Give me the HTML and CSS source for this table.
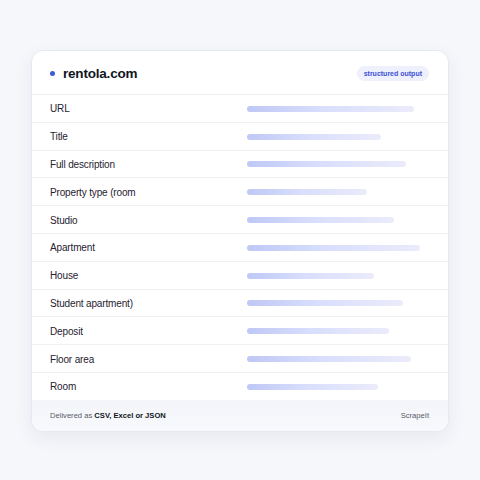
FILE: index.html
```html
<!DOCTYPE html>
<html lang="en">
<head>
    <meta charset="UTF-8">
    <meta name="viewport" content="width=device-width, initial-scale=1.0">
    <title>rentola.com - structured output</title>
    <link rel="stylesheet" href="styles.css">
</head>
<body>
    <div class="card">
        <div class="card-header">
            <div class="site">
                <span class="dot"></span>
                <span class="site-name">rentola.com</span>
            </div>
            <span class="badge">structured output</span>
        </div>

        <div class="field-list">
            <div class="field-row"><span class="field-label">URL</span><div class="bar-cell"><div class="bar" style="width: 167px"></div></div></div>
            <div class="field-row"><span class="field-label">Title</span><div class="bar-cell"><div class="bar" style="width: 134px"></div></div></div>
            <div class="field-row"><span class="field-label">Full description</span><div class="bar-cell"><div class="bar" style="width: 159px"></div></div></div>
            <div class="field-row"><span class="field-label">Property type (room</span><div class="bar-cell"><div class="bar" style="width: 120px"></div></div></div>
            <div class="field-row"><span class="field-label">Studio</span><div class="bar-cell"><div class="bar" style="width: 147px"></div></div></div>
            <div class="field-row"><span class="field-label">Apartment</span><div class="bar-cell"><div class="bar" style="width: 173px"></div></div></div>
            <div class="field-row"><span class="field-label">House</span><div class="bar-cell"><div class="bar" style="width: 127px"></div></div></div>
            <div class="field-row"><span class="field-label">Student apartment)</span><div class="bar-cell"><div class="bar" style="width: 156px"></div></div></div>
            <div class="field-row"><span class="field-label">Deposit</span><div class="bar-cell"><div class="bar" style="width: 142px"></div></div></div>
            <div class="field-row"><span class="field-label">Floor area</span><div class="bar-cell"><div class="bar" style="width: 164px"></div></div></div>
            <div class="field-row"><span class="field-label">Room</span><div class="bar-cell"><div class="bar" style="width: 131px"></div></div></div>
        </div>

        <div class="card-footer">
            <span class="delivered">Delivered as <strong>CSV, Excel or JSON</strong></span>
            <span class="brand">ScrapeIt</span>
        </div>
    </div>
</body>
</html>
```

FILE: styles.css
```css
body {
    margin: 0;
    padding: 50px 31px;
    background-color: #f6f7fb;
    font-family: 'Liberation Sans', Arial, sans-serif;
    color: #1a1d29;
}

.card {
    background-color: white;
    border: 1px solid #e6e8ef;
    border-radius: 12px;
    box-shadow: 0 6px 18px rgba(30, 40, 80, 0.07);
    overflow: hidden;
}

.card-header {
    display: flex;
    align-items: center;
    justify-content: space-between;
    height: 42px;
    padding: 1px 19px 0 18px;
    border-bottom: 1px solid #eceef3;
}

.site {
    display: flex;
    align-items: center;
    gap: 8px;
}

.dot {
    width: 5px;
    height: 5px;
    border-radius: 50%;
    background-color: #3b5bdb;
}

.site-name {
    font-size: 13.5px;
    font-weight: 700;
    color: #111522;
    letter-spacing: -0.2px;
}

.badge {
    background-color: #eef0fc;
    color: #3d4fd6;
    font-size: 7px;
    font-weight: 700;
    padding: 4px 7px;
    border-radius: 8px;
}

.field-row {
    display: flex;
    align-items: center;
    height: 25.8px;
    padding: 1px 19px 0 18px;
    border-bottom: 1px solid #eef0f4;
}

.field-row:last-child {
    border-bottom: none;
}

.field-label {
    width: 197px;
    font-size: 10px;
    letter-spacing: -0.15px;
    color: #1f2230;
}

.bar-cell {
    flex: 1;
}

.bar {
    height: 6px;
    border-radius: 3px;
    background: linear-gradient(90deg, #bfc8f6 0%, #d8defc 45%, #ebebfa 100%);
}

.card-footer {
    display: flex;
    align-items: center;
    justify-content: space-between;
    height: 30px;
    padding: 1px 19px 0 18px;
    background: linear-gradient(180deg, #f3f5fa 0%, #f8f9fc 100%);
    font-size: 7.6px;
    color: #555a68;
}

.card-footer strong {
    color: #111522;
    font-weight: 700;
}

.brand {
    color: #555a68;
}
```
